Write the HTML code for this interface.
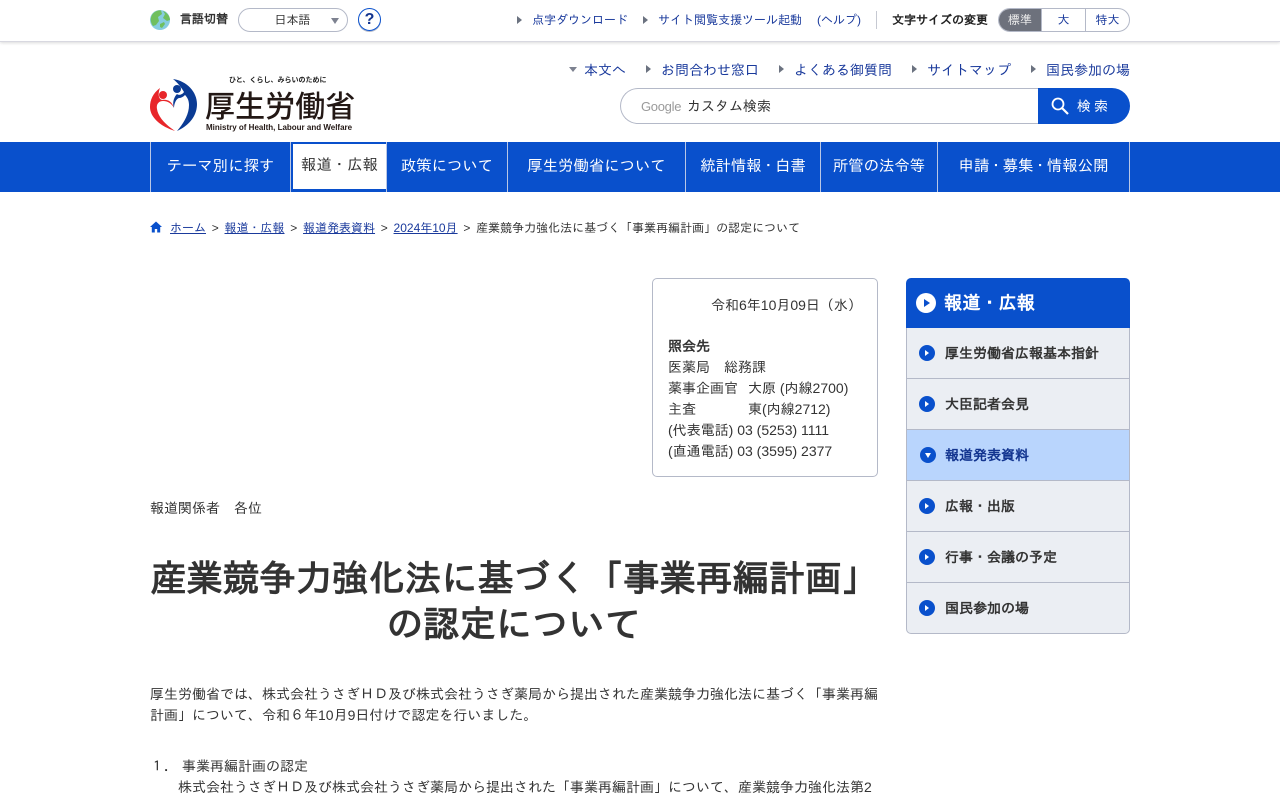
<!DOCTYPE html>
<html lang="ja"><head><meta charset="utf-8"><title>産業競争力強化法に基づく「事業再編計画」の認定について</title>
<style>
*{box-sizing:border-box;margin:0;padding:0}
html,body{width:1280px;height:800px;overflow:hidden;background:#fff}
body{font-family:"Liberation Sans","IPAGothic",sans-serif;color:#333;position:relative;font-size:14px}
.a{position:absolute;white-space:nowrap}
.lk{color:#1a3a9c}
.tri{position:absolute;width:0;height:0;border-left:5px solid #6b7280;border-top:4px solid transparent;border-bottom:4px solid transparent}
#top{position:absolute;left:0;top:0;width:1280px;height:42px;border-bottom:1px solid #d8d8e0;box-shadow:0 1px 3px rgba(0,0,0,.15)}
.nav{position:absolute;top:142px;left:0;width:1280px;height:50px;background:#0950cc}
.nv{position:absolute;top:0;height:50px;line-height:50px;color:#fff;font-size:15.4px;text-align:center;border-left:1px solid #b9c7e6;white-space:nowrap}
.nv u{text-decoration:none;margin:0 -1px}
.sd{position:absolute;left:906px;width:224px;height:51px;background:#ebeef3;border:1px solid #b4b9c8;border-top:0;font-weight:bold;font-size:14px;line-height:50px;padding-left:38px;color:#333}
.ci{position:absolute;left:12px;top:17px;width:16px;height:16px;border-radius:50%;background:#0950cc}
.ci:after{content:"";position:absolute;left:6px;top:5px;border-left:4px solid #fff;border-top:3px solid transparent;border-bottom:3px solid transparent}
.ci.dn:after{left:4.5px;top:6px;border-top:5px solid #fff;border-left:3.5px solid transparent;border-right:3.5px solid transparent;border-bottom:0}
.bc a{color:#1a3a9c;text-decoration:underline}
.bc s{text-decoration:none;margin:0 5.75px}
</style></head><body>
<div id="top"></div>
<svg class="a" style="left:150px;top:10px" width="20" height="20" viewBox="0 0 20 20"><circle cx="10" cy="10" r="10" fill="#86cde0"/><path d="M3 3.5C6 .5 9 0 11 .5L12 4 8 7 9 11 6 15 3 16C0 12 0 7 3 3.5Z" fill="#6fbf5f"/><path d="M13 1C17 2.5 20 6 20 10L17 11 13 8 15 4Z" fill="#6fbf5f"/><path d="M10 14l4-2 1 2-3 4-2-1Z" fill="#6fbf5f"/></svg>
<div class="a" style="left:180px;top:10px;font-size:12px;line-height:18px;font-weight:bold;color:#333">言語切替</div>
<div class="a" style="left:238px;top:8px;width:110px;height:24px;border:1px solid #b4b9c8;border-radius:12px;font-size:12px;line-height:22px;text-align:center;padding-right:1px">日本語</div>
<div class="a" style="left:331px;top:18px;width:0;height:0;border-top:6px solid #7d8290;border-left:4.5px solid transparent;border-right:4.5px solid transparent"></div>
<div class="a" style="left:358px;top:8px;width:23px;height:23px;border:1.5px solid #0950cc;border-radius:50%;font-size:16px;line-height:21px;text-align:center;font-weight:bold;color:#12348f;box-shadow:0 1px 0 #b4b9c8">?</div>
<div class="tri" style="left:517px;top:16px"></div>
<div class="a lk" style="left:532px;top:11px;font-size:12px;line-height:18px">点字ダウンロード</div>
<div class="tri" style="left:643px;top:16px"></div>
<div class="a lk" style="left:658px;top:11px;font-size:12px;line-height:18px">サイト閲覧支援ツール起動</div>
<div class="a lk" style="left:817px;top:11px;font-size:12px;line-height:18px">(ヘルプ)</div>
<div class="a" style="left:876px;top:11px;width:1px;height:18px;background:#c6c9d2"></div>
<div class="a" style="left:892px;top:11px;font-size:12px;line-height:18px;font-weight:bold;color:#222">文字サイズの変更</div>
<div class="a" style="left:998px;top:8px;width:132px;height:24px;border:1px solid #b4b9c8;border-radius:12px;overflow:hidden;font-size:12px;line-height:22px;color:#1a3a9c">
<span class="a" style="left:0;top:0;width:42px;height:22px;background:#6d717c;color:#eee;text-align:center">標準</span>
<span class="a" style="left:42px;top:0;width:45px;height:22px;border-left:1px solid #b4b9c8;border-right:1px solid #b4b9c8;text-align:center">大</span>
<span class="a" style="left:87px;top:0;width:43px;height:22px;text-align:center">特大</span></div>

<div class="a" style="left:569px;top:67px;width:0;height:0;border-top:5px solid #7d8290;border-left:4px solid transparent;border-right:4px solid transparent"></div>
<div class="a lk" style="left:584px;top:60px;line-height:20px">本文へ</div>
<div class="tri" style="left:646px;top:65px"></div>
<div class="a lk" style="left:661px;top:60px;line-height:20px">お問合わせ窓口</div>
<div class="tri" style="left:779px;top:65px"></div>
<div class="a lk" style="left:794px;top:60px;line-height:20px">よくある御質問</div>
<div class="tri" style="left:912px;top:65px"></div>
<div class="a lk" style="left:927px;top:60px;line-height:20px">サイトマップ</div>
<div class="tri" style="left:1031px;top:65px"></div>
<div class="a lk" style="left:1046px;top:60px;line-height:20px">国民参加の場</div>

<svg class="a" style="left:150px;top:79px" width="48" height="54" viewBox="0 0 48 54">
<circle cx="13" cy="16" r="4" fill="#e8262a"/><circle cx="27" cy="10" r="4" fill="#0b3b94"/>
<path d="M10 9C3 14 0 21 0 28 0 39 12 48 25 52 16 46 8 38 7 30 6 25 9 22 13 22 18 22 22 25 24 29 22 22 17 20 12 21 8 20 8 14 10 9Z" fill="#e8262a"/>
<path d="M23 0C37 2 47 13 47 25 47 38 38 47 27 52 33 45 39 36 39 26 39 21 37 18 35 16 33 18 31 19 29 19 26 20 24 25 24 29 22 24 24 18 27 15 29 17 33 15 34 13 31 8 27 3 23 0Z" fill="#0b3b94"/></svg>
<div class="a" style="left:229px;top:75px;font-family:'Noto Sans CJK JP',sans-serif;font-size:7px;line-height:11px;font-weight:bold;color:#222">ひと、くらし、みらいのために</div>
<div class="a" style="left:205px;top:83px;font-family:'Noto Sans CJK JP',sans-serif;font-size:30px;line-height:42px;font-weight:500;color:#231815;letter-spacing:.1px;width:150px">厚生労働省</div>
<div class="a" style="left:206px;top:122px;font-size:8px;line-height:11px;font-weight:bold;color:#231815">Ministry of Health, Labour and Welfare</div>

<div class="a" style="left:620px;top:88px;width:420px;height:36px;border:1px solid #b4b9c8;border-right:0;border-radius:18px 0 0 18px"></div>
<div class="a" style="left:641px;top:98px;font-size:13px;line-height:18px;color:#9a9a9a;letter-spacing:-.3px">Google</div>
<div class="a" style="left:687px;top:97px;font-size:14px;line-height:18px;color:#333">カスタム検索</div>
<div class="a" style="left:1038px;top:88px;width:92px;height:36px;background:#0950cc;border-radius:0 18px 18px 0"></div>
<svg class="a" style="left:1051px;top:97px" width="18" height="18" viewBox="0 0 18 18" fill="none" stroke="#fff" stroke-width="1.8"><circle cx="7" cy="7" r="5.5"/><path d="M11 11l6 6" stroke-width="2.2"/></svg>
<div class="a" style="left:1077px;top:97px;font-size:14px;line-height:18px;color:#fff;letter-spacing:3px">検索</div>

<div class="nav">
<div class="nv" style="left:150px;width:140px">テーマ別に探す</div>
<div class="nv" style="left:290px;width:97px;border-right:1px solid #b9c7e6"><div style="position:absolute;left:1px;top:2px;width:95px;height:45px;color:#333;line-height:44px;z-index:1">報道・広報</div><div style="position:absolute;left:2px;top:2px;width:93px;height:45px;background:#fff"></div></div>
<div class="nv" style="left:387px;width:120px;border-left:0">政策について</div>
<div class="nv" style="left:507px;width:178px">厚生労働省について</div>
<div class="nv" style="left:685px;width:135px">統計情報<u>・</u>白書</div>
<div class="nv" style="left:820px;width:117px">所管の法令等</div>
<div class="nv" style="left:937px;width:193px;border-right:1px solid #b9c7e6">申請<u>・</u>募集<u>・</u>情報公開</div>
</div>

<svg class="a" style="left:150px;top:221px" width="12" height="12" viewBox="0 0 12 12"><path d="M6 0.5L0 6h1.8v5.5h3V8h2.4v3.5h3V6H12Z" fill="#0950cc"/></svg>
<div class="a bc" style="left:170px;top:219px;font-size:12px;line-height:18px;color:#333"><a>ホーム</a><s>&gt;</s><a>報道・広報</a><s>&gt;</s><a>報道発表資料</a><s>&gt;</s><a>2024年10月</a><s>&gt;</s>産業競争力強化法に基づく「事業再編計画」の認定について</div>

<div class="a" style="left:652px;top:278px;width:226px;height:199px;border:1px solid #b4b9c8;border-radius:5px"></div>
<div class="a" style="left:711px;top:296px;line-height:18px">令和6年10月09日（水）</div>
<div class="a" style="left:668px;top:336px;line-height:21px"><b>照会先</b><br>医薬局　総務課<br>薬事企画官<span style="margin-left:10px">大原 (内線2700)</span><br>主査<span style="margin-left:52px">東(内線2712)</span><br>(代表電話) 03 (5253) 1111<br>(直通電話) 03 (3595) 2377</div>

<div class="a" style="left:150px;top:498px;line-height:21px">報道関係者　各位</div>
<div class="a" style="left:150px;top:556px;width:728px;font-size:36.4px;line-height:46px;font-weight:bold;text-align:center;color:#333;white-space:normal">産業競争力強化法に基づく「事業再編計画」<br>の認定について</div>
<div class="a" style="left:150px;top:684px;line-height:21px">厚生労働省では、株式会社うさぎＨＤ及び株式会社うさぎ薬局から提出された産業競争力強化法に基づく「事業再編<br>計画」について、令和６年10月9日付けで認定を行いました。</div>
<div class="a" style="left:150px;top:756px;line-height:21px">１．<span style="margin-left:4px">事業再編計画の認定</span></div>
<div class="a" style="left:178px;top:777px;line-height:21px">株式会社うさぎＨＤ及び株式会社うさぎ薬局から提出された「事業再編計画」について、産業競争力強化法第2</div>

<div class="a" style="left:906px;top:278px;width:224px;height:50px;background:#0950cc;border-radius:5px 5px 0 0;color:#fff;font-size:18.2px;font-weight:bold;line-height:50px;padding-left:38px">報道・広報</div>
<div class="a" style="left:916px;top:293px;width:20px;height:20px;border-radius:50%;background:#fff"></div>
<div class="a" style="left:924px;top:299px;border-left:6px solid #0950cc;border-top:4px solid transparent;border-bottom:4px solid transparent"></div>
<div class="sd" style="top:328px"><i class="ci"></i>厚生労働省広報基本指針</div>
<div class="sd" style="top:379px"><i class="ci"></i>大臣記者会見</div>
<div class="sd" style="top:430px;background:#b9d5fd;color:#12348f"><i class="ci dn" style="left:13px"></i>報道発表資料</div>
<div class="sd" style="top:481px"><i class="ci"></i>広報・出版</div>
<div class="sd" style="top:532px"><i class="ci"></i>行事・会議の予定</div>
<div class="sd" style="top:583px;border-radius:0 0 5px 5px"><i class="ci"></i>国民参加の場</div>
</body></html>
